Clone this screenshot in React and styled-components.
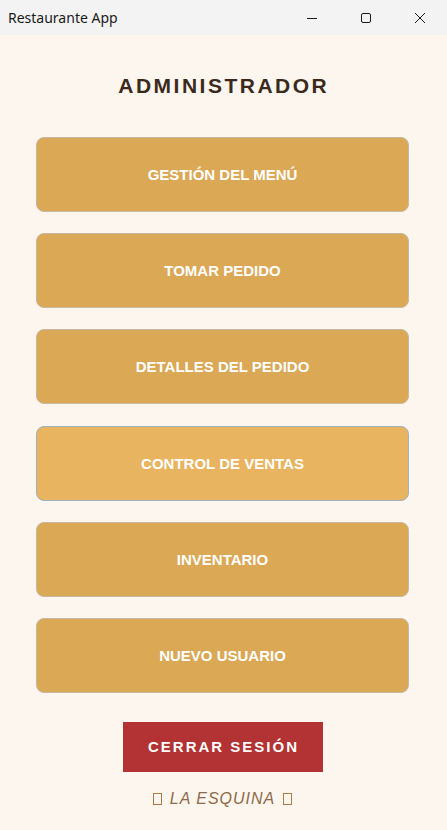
import React from "react";
import styled, { createGlobalStyle } from "styled-components";

const Global = createGlobalStyle`
  html, body { margin: 0; padding: 0; background: #fdf6ef; }
  body { font-family: "Liberation Sans", Arial, sans-serif; }
`;

const Window = styled.div`
  width: 447px;
  height: 830px;
  display: flex;
  flex-direction: column;
  background: #fdf6ef;
  overflow: hidden;
`;

const TitleBar = styled.div`
  height: 35px;
  flex: none;
  background: #f3f3f3;
  display: flex;
  align-items: center;
`;

const TitleText = styled.div`
  flex: 1;
  padding-left: 8px;
  font-family: "Noto Sans", "Open Sans", sans-serif;
  font-size: 14px;
  color: #1a1a1a;
`;

const Ctrl = styled.div`
  width: 54px;
  height: 35px;
  display: flex;
  align-items: center;
  justify-content: center;
`;

const Main = styled.main`
  flex: 1;
  display: flex;
  flex-direction: column;
  align-items: center;
  padding: 39px 38px 0 36px;
`;

const Heading = styled.h1`
  margin: 0 0 39px;
  padding-left: 2.5px;
  font-family: "Liberation Sans", Arial, sans-serif;
  font-size: 21px;
  line-height: 24px;
  font-weight: 700;
  letter-spacing: 2.5px;
  color: #3b2a1b;
`;

const Menu = styled.div`
  width: 100%;
  display: grid;
  row-gap: 21.2px;
`;

const MenuButton = styled.button`
  height: 75px;
  width: 100%;
  box-sizing: border-box;
  border-radius: 8px;
  border: 1px solid ${(p) => (p.$hover ? "#9fb2c2" : "#c7b7a3")};
  background: ${(p) => (p.$hover ? "#e9b45f" : "#dba856")};
  color: #ffffff;
  font-family: "Liberation Sans", Arial, sans-serif;
  font-weight: 700;
  font-size: 15px;
  cursor: pointer;
`;

const Logout = styled.button`
  margin-top: 29px;
  width: 200px;
  height: 50px;
  border: none;
  background: #b33233;
  color: #ffffff;
  font-family: "Liberation Sans", Arial, sans-serif;
  font-weight: 700;
  font-size: 15px;
  letter-spacing: 2px;
  padding: 0 0 0 2px;
  cursor: pointer;
`;

const Footer = styled.div`
  margin-top: 17px;
  font-family: "Liberation Sans", Arial, sans-serif;
  font-style: italic;
  font-size: 16px;
  line-height: 20px;
  letter-spacing: 1px;
  color: #8d6a48;
  display: flex;
  align-items: center;
  gap: 8px;
`;

const Tofu = styled.span`
  display: inline-block;
  width: 7px;
  height: 10px;
  border: 1px solid #b07a45;
`;

const items = [
  "GESTIÓN DEL MENÚ",
  "TOMAR PEDIDO",
  "DETALLES DEL PEDIDO",
  "CONTROL DE VENTAS",
  "INVENTARIO",
  "NUEVO USUARIO",
];

export default function App() {
  return (
    <>
      <Global />
      <Window>
        <TitleBar>
          <TitleText>Restaurante App</TitleText>
          <Ctrl>
            <svg width="12" height="12" viewBox="0 0 12 12">
              <path d="M1 6.5h10" stroke="#1a1a1a" strokeWidth="1" />
            </svg>
          </Ctrl>
          <Ctrl>
            <svg width="12" height="12" viewBox="0 0 12 12">
              <rect x="1.5" y="1.5" width="9" height="9" rx="1.5" fill="none" stroke="#1a1a1a" strokeWidth="1" />
            </svg>
          </Ctrl>
          <Ctrl>
            <svg width="12" height="12" viewBox="0 0 12 12">
              <path d="M1 1L11 11M11 1L1 11" stroke="#1a1a1a" strokeWidth="1" />
            </svg>
          </Ctrl>
        </TitleBar>
        <Main>
          <Heading>ADMINISTRADOR</Heading>
          <Menu>
            {items.map((t, i) => (
              <MenuButton key={t} $hover={i === 3}>
                {t}
              </MenuButton>
            ))}
          </Menu>
          <Logout>CERRAR SESIÓN</Logout>
          <Footer>
            <Tofu />
            <span>LA ESQUINA</span>
            <Tofu />
          </Footer>
        </Main>
      </Window>
    </>
  );
}
